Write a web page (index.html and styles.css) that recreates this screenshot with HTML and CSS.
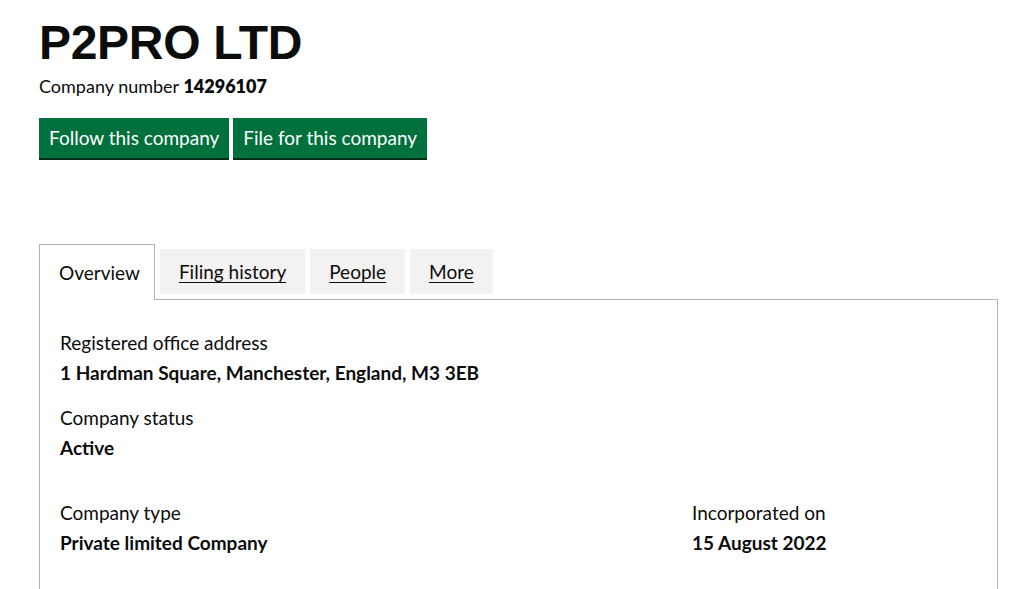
FILE: index.html
```html
<!DOCTYPE html>
<html lang="en">
<head>
  <meta charset="UTF-8" />
  <title>P2PRO LTD - Overview</title>
  <link rel="stylesheet" href="styles.css">
</head>
<body>
  <main class="page">
    <h1 class="heading">P2PRO LTD</h1>
    <p class="company-number">Company number <strong>14296107</strong></p>

    <div class="actions">
      <a class="button" href="#">Follow this company</a>
      <a class="button" href="#">File for this company</a>
    </div>

    <div class="tabs">
      <ul class="tab-list">
        <li class="tab tab-selected"><span>Overview</span></li>
        <li class="tab"><a href="#">Filing history</a></li>
        <li class="tab"><a href="#">People</a></li>
        <li class="tab"><a href="#">More</a></li>
      </ul>

      <div class="panel">
        <dl class="detail">
          <dt>Registered office address</dt>
          <dd>1 Hardman Square, Manchester, England, M3 3EB</dd>
        </dl>
        <dl class="detail">
          <dt>Company status</dt>
          <dd>Active</dd>
        </dl>
        <div class="row">
          <dl class="detail">
            <dt>Company type</dt>
            <dd>Private limited Company</dd>
          </dl>
          <dl class="detail">
            <dt>Incorporated on</dt>
            <dd>15 August 2022</dd>
          </dl>
        </div>
      </div>
    </div>
  </main>
</body>
</html>
```

FILE: styles.css
```css
body {
  margin: 0;
  font-family: 'Lato', 'Noto Sans', sans-serif;
  color: #0b0c0c;
  background: #fff;
}
.page {
  padding: 14px 23px 0 39px;
}
.heading {
  font-family: 'Liberation Sans', Arial, sans-serif;
  font-size: 48px;
  font-weight: bold;
  line-height: 1;
  margin: 5px 0 0 0;
  letter-spacing: -0.3px;
}
.company-number {
  font-size: 18px;
  margin: 8px 0 0 0;
}
.company-number strong {
  font-weight: 800;
}
.actions {
  display: flex;
  gap: 4px;
  margin-top: 21px;
}
.button {
  display: block;
  background: #00703c;
  color: #fff;
  text-decoration: none;
  font-size: 19px;
  line-height: 40px;
  padding: 0 10px;
  box-shadow: 0 2px 0 #002d18;
  height: 40px;
}
.tabs {
  margin-top: 86px;
}
.tab-list {
  list-style: none;
  margin: 0;
  padding: 0;
  display: flex;
  align-items: flex-start;
  gap: 5px;
}
.tab {
  background: #f3f2f1;
  margin-top: 5px;
  height: 45px;
  padding: 0 19px;
  font-size: 19px;
  line-height: 45px;
}
.tab a {
  color: #0b0c0c;
  text-decoration: underline;
  text-underline-offset: 3px;
}
.tab-selected {
  background: #fff;
  border: 1px solid #b1b4b6;
  border-bottom: 0;
  margin-top: 0;
  height: 55px;
  line-height: 55px;
  padding: 0 14px 0 19px;
  position: relative;
  z-index: 1;
}
.panel {
  border: 1px solid #b1b4b6;
  margin-top: -1px;
  padding: 30px 20px 40px 20px;
  min-height: 300px;
}
.detail {
  margin: 0 0 20px 0;
}
.detail dt {
  font-size: 19px;
  line-height: 25px;
}
.detail dd {
  margin: 5px 0 0 0;
  font-size: 19px;
  font-weight: bold;
  line-height: 25px;
}
.row {
  display: grid;
  grid-template-columns: 632px 1fr;
  margin-top: 40px;
}
```
